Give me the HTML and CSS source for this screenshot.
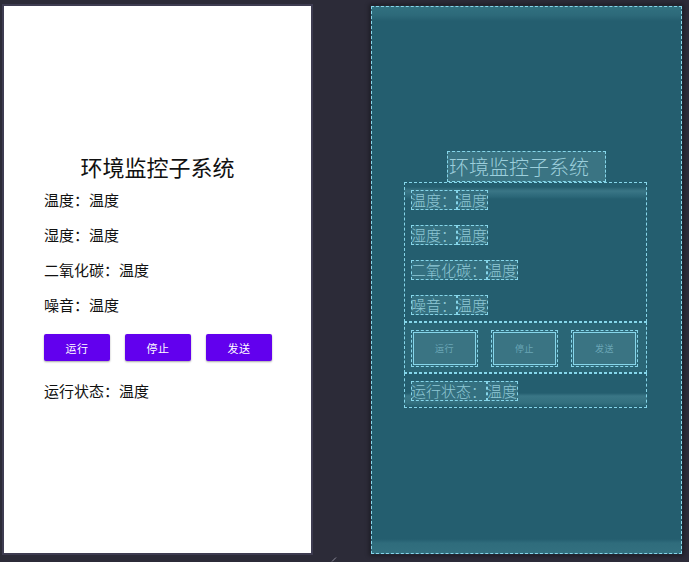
FILE: index.html
```html
<!DOCTYPE html>
<html lang="zh">
<head>
<meta charset="utf-8">
<title>环境监控子系统</title>
<link rel="stylesheet" href="styles.css">
</head>
<body>
<div class="stage">
  <div class="phone">
    <div class="title">环境监控子系统</div>
    <div class="box">
      <div class="sec sec-rows">
        <div class="row"><span class="lb">温度：</span><span class="lb">温度</span></div>
        <div class="row"><span class="lb">湿度：</span><span class="lb">温度</span></div>
        <div class="row"><span class="lb">二氧化碳：</span><span class="lb">温度</span></div>
        <div class="row"><span class="lb">噪音：</span><span class="lb">温度</span></div>
      </div>
      <div class="sec sec-btns">
        <div class="btn"><div class="face">运行</div></div>
        <div class="btn"><div class="face">停止</div></div>
        <div class="btn"><div class="face">发送</div></div>
      </div>
      <div class="sec sec-status">
        <div class="row"><span class="lb">运行状态：</span><span class="lb">温度</span></div>
      </div>
    </div>
  </div>

  <div class="phone bp">
    <div class="title">环境监控子系统</div>
    <div class="box">
      <div class="sec sec-rows">
        <div class="row"><span class="lb">温度：</span><span class="lb">温度</span></div>
        <div class="row"><span class="lb">湿度：</span><span class="lb">温度</span></div>
        <div class="row"><span class="lb">二氧化碳：</span><span class="lb">温度</span></div>
        <div class="row"><span class="lb">噪音：</span><span class="lb">温度</span></div>
      </div>
      <div class="sec sec-btns">
        <div class="btn"><div class="face">运行</div></div>
        <div class="btn"><div class="face">停止</div></div>
        <div class="btn"><div class="face">发送</div></div>
      </div>
      <div class="sec sec-status">
        <div class="row"><span class="lb">运行状态：</span><span class="lb">温度</span></div>
      </div>
    </div>
  </div>
</div>
<svg class="handle" width="6" height="6" viewBox="0 0 6 6"><path d="M1 5.5 L5 1.5" stroke="#8a8a98" stroke-width="1"/></svg>
</body>
</html>
```
FILE: styles.css
```css
html, body {
  margin: 0;
  padding: 0;
}
body {
  width: 689px;
  height: 562px;
  overflow: hidden;
  background: #2c2b38;
  font-family: "Noto Sans CJK SC", "Noto Sans", sans-serif;
  position: relative;
}
.stage {
  display: flex;
  align-items: flex-start;
  padding: 4px 0 0 2px;
  gap: 58px;
}
.phone {
  width: 307px;
  height: 547px;
  border: 2px solid #3e3c51;
  background: #ffffff;
}
.phone > .title { margin-top: 145px; }

.title {
  width: 159px;
  height: 31px;
  line-height: 31px;
  margin-left: auto;
  margin-right: auto;
  text-align: center;
  font-size: 22px;
  color: #111;
  white-space: nowrap;
}
.box {
  margin-left: 33px;
  width: 243px;
}
.sec-rows {
  display: flex;
  flex-direction: column;
  gap: 15px;
  padding: 8px 0 7px 7px;
}
.row {
  display: flex;
  height: 20px;
  line-height: 20px;
  font-size: 15px;
  color: #111;
  white-space: nowrap;
}
.lb {
  display: block;
  height: 20px;
}
.sec-btns {
  display: flex;
  gap: 15px;
  height: 51px;
  box-sizing: border-box;
  padding: 8px 0 0 7px;
}
.btn {
  width: 66px;
  height: 37px;
  display: flex;
  flex-direction: column;
}
.face {
  margin: 4px 0 6px;
  flex: 1;
  background: #6200ee;
  border-radius: 2px;
  box-shadow: 0 1px 2px rgba(0, 0, 0, 0.35);
  color: #fff;
  font-size: 11px;
  display: flex;
  align-items: center;
  justify-content: center;
  letter-spacing: 0.5px;
}
.sec-status {
  padding: 8px 0 7px 7px;
}

/* blueprint view */
.bp {
  width: 309px;
  height: 546px;
  margin-top: 2px;
  border: 1px dashed #86d6ea;
  background:
    linear-gradient(#31707f, #2d6a7a 8px, #245e6f 14px, #245e6f calc(100% - 14px), #2f6c7c calc(100% - 10px), #33707f);
  box-shadow: 0 0 0 1px #24232e, 0 0 4px 2px rgba(0,0,0,0.35);
}
.bp > .title {
  margin-top: 144px;
  background: #3a7483;
  outline: 1px dashed #86d6ea;
  outline-offset: -1px;
  color: #9ccfdc;
  font-size: 20px;
  font-weight: 300;
  text-align: left;
  padding-left: 2px;
  box-sizing: border-box;
}
.bp .box {
  margin-left: 32px;
}
.bp .sec {
  outline: 1px dashed #86d6ea;
  outline-offset: -1px;
}
.bp .sec-rows {
  background: linear-gradient(#245e6f, #245e6f 5px, #3a7686 9px, #2a6677 15px, #245e6f 17px);
}
.bp .sec-btns {
  background: #2a6676;
  gap: 13px;
}
.bp .sec-status {
  background: linear-gradient(#245e6f, #245e6f 20px, #3a7686 23px, #33707f 30px, #245e6f 34px);
}
.bp .row {
  color: #8fc8d6;
  font-weight: 300;
}
.bp .lb {
  background: #347080;
  outline: 1px dashed #86d6ea;
  outline-offset: -1px;
  padding-right: 1px;
}
.bp .btn {
  width: 67px;
  outline: 1px dashed #86d6ea;
  outline-offset: -1px;
  background: #2f6b7b;
}
.bp .face {
  margin: 2px;
  background: #3a7483;
  border: 1px solid #86d6ea;
  border-radius: 0;
  box-shadow: none;
  color: #6aa6b6;
  font-size: 9px;
}

.handle {
  position: absolute;
  left: 331px;
  top: 556px;
}
```
